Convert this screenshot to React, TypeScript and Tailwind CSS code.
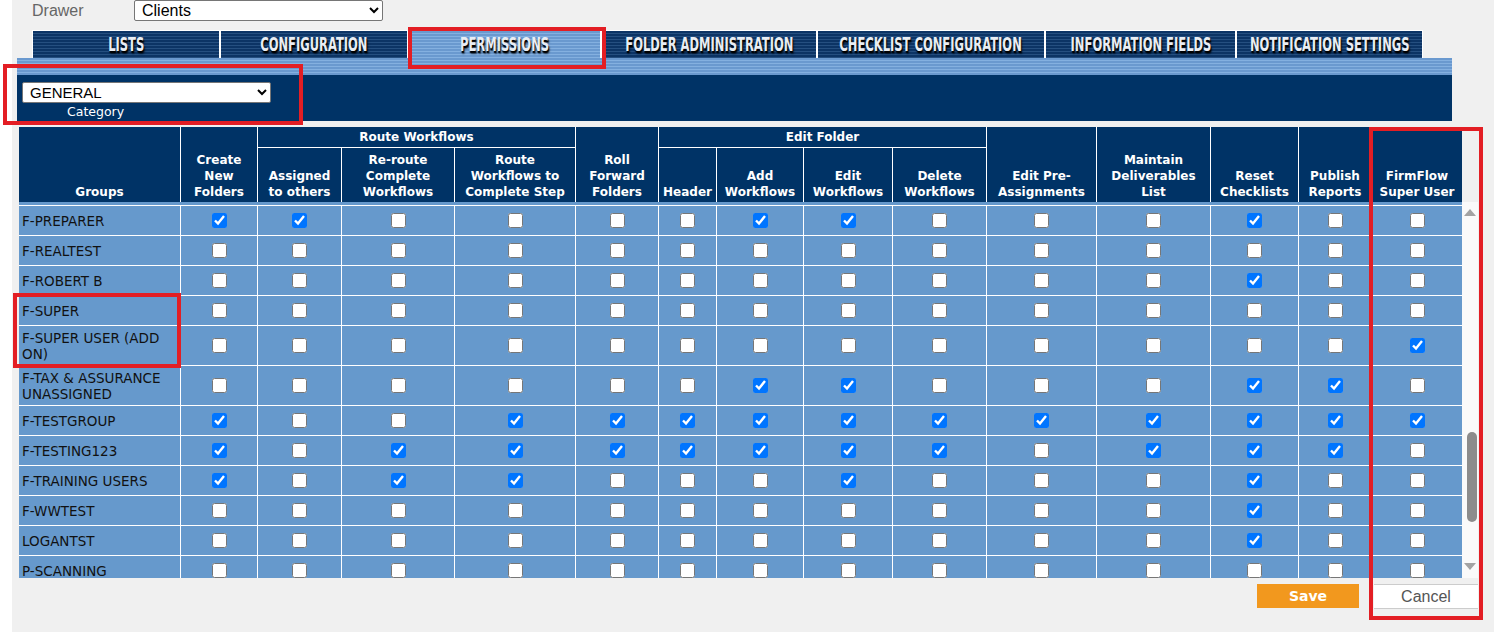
import React from "react";
import clsx from "clsx";

type Row = { name: React.ReactNode; checked: number[]; tall?: boolean };

// widths of the 14 permission columns (Groups column is 162px)
const colW = [
  "w-[77px]",
  "w-[84px]",
  "w-[113px]",
  "w-[121px]",
  "w-[83px]",
  "w-[58px]",
  "w-[87px]",
  "w-[89px]",
  "w-[94px]",
  "w-[110px]",
  "w-[114px]",
  "w-[88px]",
  "w-[73px]",
  "w-[90px]",
];

const rows: Row[] = [
  { name: "F-PREPARER", checked: [0, 1, 6, 7, 11] },
  { name: "F-REALTEST", checked: [] },
  { name: "F-ROBERT B", checked: [11] },
  { name: "F-SUPER", checked: [] },
  { name: "F-SUPER USER (ADD ON)", checked: [13], tall: true },
  { name: "F-TAX & ASSURANCE UNASSIGNED", checked: [6, 7, 11, 12], tall: true },
  { name: "F-TESTGROUP", checked: [0, 3, 4, 5, 6, 7, 8, 9, 10, 11, 12, 13] },
  { name: "F-TESTING123", checked: [0, 2, 3, 4, 5, 6, 7, 8, 10, 11, 12] },
  { name: "F-TRAINING USERS", checked: [0, 2, 3, 7, 11] },
  { name: "F-WWTEST", checked: [11] },
  { name: "LOGANTST", checked: [11] },
  { name: "P-SCANNING", checked: [] },
];

const tabs = [
  { label: "LISTS", w: "w-[188px]" },
  { label: "CONFIGURATION", w: "w-[188px]" },
  { label: "PERMISSIONS", w: "w-[193px]", active: true },
  { label: "FOLDER ADMINISTRATION", w: "w-[216px]" },
  { label: "CHECKLIST CONFIGURATION", w: "w-[228px]" },
  { label: "INFORMATION FIELDS", w: "w-[191px]" },
  { label: "NOTIFICATION SETTINGS", w: "w-[187px]" },
];

const HeadCell = ({
  w,
  last,
  children,
}: {
  w: string;
  last?: boolean;
  children: React.ReactNode;
}) => (
  <div
    className={clsx(
      "flex shrink-0 items-end justify-center pb-[2px] text-center",
      w,
      !last && "border-r border-white"
    )}
  >
    <span>{children}</span>
  </div>
);

const Tab = ({ label, w, active }: { label: string; w: string; active?: boolean }) => (
  <div
    className={clsx(
      "flex h-[28px] shrink-0 items-center justify-center border-x border-t border-white",
      w,
      active
        ? "bg-[repeating-linear-gradient(to_bottom,#6a99cf_0px,#6a99cf_2px,#84b0e0_2px,#84b0e0_3px)]"
        : "bg-[repeating-linear-gradient(to_bottom,#0c3465_0px,#0c3465_2px,#254f80_2px,#254f80_3px)]"
    )}
  >
    <span className="inline-block scale-x-[0.64] scale-y-[1.08] whitespace-nowrap font-['DejaVu_Sans',sans-serif] text-[18px] leading-none font-bold text-[#e9edf3] [text-shadow:1px_1px_1px_#000,2px_2px_2px_rgba(0,0,0,0.6)]">
      {label}
    </span>
  </div>
);

const App = () => {
  return (
    <div className="relative flex h-[632px] w-[1494px] overflow-hidden bg-white font-['Liberation_Sans',Arial,sans-serif]">
      <div className="ml-[12px] flex flex-1 flex-col bg-[#f0f0f0]">
        {/* drawer picker */}
        <div className="flex h-[21px] items-start pl-[20px]">
          <span className="w-[102px] pt-[2px] text-[16px] leading-[18px] text-[#666]">Drawer</span>
          <select className="h-[21px] w-[249px] rounded-[2px] border border-[#767676] bg-white pl-[3px] text-[16px] leading-[18px] text-black">
            <option>Clients</option>
          </select>
        </div>

        {/* tabs */}
        <div className="mt-[9px] flex pl-[20px]">
          {tabs.map((t) => (
            <Tab key={t.label} {...t} />
          ))}
        </div>

        <div className="ml-[5px] h-[17px] w-[1435px] bg-[repeating-linear-gradient(to_bottom,#6a99cf_0px,#6a99cf_2px,#84b0e0_2px,#84b0e0_3px)]" />

        <div className="ml-[5px] flex h-[46px] w-[1435px] flex-col bg-[#003366] pl-[5px] pt-[7px]">
          <select className="h-[21px] w-[249px] rounded-[2px] border border-[#767676] bg-white pl-[3px] text-[15px] leading-[18px] text-black">
            <option>GENERAL</option>
          </select>
          <span className="pl-[45px] pt-[1px] font-['DejaVu_Sans',sans-serif] text-[12.5px] leading-[15px] text-white">
            Category
          </span>
        </div>

        {/* permissions grid */}
        <div className="ml-[7px] mt-[6px] flex w-[1459px] flex-col">
          <div className="flex h-[75px] w-[1443px] bg-[#003366] font-['DejaVu_Sans',sans-serif] text-[12px] leading-[16px] font-bold text-white">
            <HeadCell w="w-[162px]">Groups</HeadCell>
            <HeadCell w="w-[77px]">
              Create<br />New<br />Folders
            </HeadCell>
            <div className="flex w-[318px] shrink-0 flex-col border-r border-white">
              <div className="flex h-[21px] items-center justify-center border-b border-white">Route Workflows</div>
              <div className="flex flex-1">
                <HeadCell w="w-[84px]">
                  Assigned<br />to others
                </HeadCell>
                <HeadCell w="w-[113px]">
                  Re-route<br />Complete<br />Workflows
                </HeadCell>
                <HeadCell w="w-[120px]" last>
                  Route<br />Workflows to<br />Complete Step
                </HeadCell>
              </div>
            </div>
            <HeadCell w="w-[83px]">
              Roll<br />Forward<br />Folders
            </HeadCell>
            <div className="flex w-[328px] shrink-0 flex-col border-r border-white">
              <div className="flex h-[21px] items-center justify-center border-b border-white">Edit Folder</div>
              <div className="flex flex-1">
                <HeadCell w="w-[58px]">Header</HeadCell>
                <HeadCell w="w-[87px]">
                  Add<br />Workflows
                </HeadCell>
                <HeadCell w="w-[89px]">
                  Edit<br />Workflows
                </HeadCell>
                <HeadCell w="w-[93px]" last>
                  Delete<br />Workflows
                </HeadCell>
              </div>
            </div>
            <HeadCell w="w-[110px]">
              Edit Pre-<br />Assignments
            </HeadCell>
            <HeadCell w="w-[114px]">
              Maintain<br />Deliverables<br />List
            </HeadCell>
            <HeadCell w="w-[88px]">
              Reset<br />Checklists
            </HeadCell>
            <HeadCell w="w-[73px]">
              Publish<br />Reports
            </HeadCell>
            <HeadCell w="w-[90px]" last>
              FirmFlow<br />Super User
            </HeadCell>
          </div>

          <div className="flex h-[376px]">
            <div className="w-[1443px] overflow-hidden bg-[#6699cc] pt-[3px]">
              <div className="border-t border-white">
                {rows.map((r, ri) => (
                  <div
                    key={ri}
                    className={clsx("flex border-b border-white", r.tall ? "h-[40px]" : "h-[30px]")}
                  >
                    <div className="flex w-[162px] shrink-0 items-center border-r border-white pl-[3px] pr-[2px] font-['DejaVu_Sans',sans-serif] text-[13.5px] leading-[16px] text-[#111]">
                      {r.name}
                    </div>
                    {colW.map((w, i) => (
                      <div
                        key={i}
                        className={clsx(
                          "flex shrink-0 items-center justify-center",
                          w,
                          i < colW.length - 1 && "border-r border-white"
                        )}
                      >
                        <input
                          type="checkbox"
                          className="h-[15px] w-[15px]"
                          defaultChecked={r.checked.includes(i)}
                        />
                      </div>
                    ))}
                  </div>
                ))}
              </div>
            </div>
            {/* scrollbar */}
            <div className="flex w-[16px] flex-col items-center bg-[#fafafa]">
              <div className="mt-[7px] h-0 w-0 border-x-[6px] border-b-[7px] border-x-transparent border-b-[#a3a3a3]" />
              <div className="ml-[3px] mt-[216px] h-[90px] w-[10px] rounded-full bg-[#8c8c8c]" />
              <div className="mb-[8px] mt-auto h-0 w-0 border-x-[6px] border-t-[7px] border-x-transparent border-t-[#a3a3a3]" />
            </div>
          </div>

          <div className="mt-[6px] flex justify-end gap-[15px]">
            <button className="flex h-[24px] w-[102px] items-center justify-center bg-[#f2981e] font-['DejaVu_Sans',sans-serif] text-[14px] font-bold text-white">
              Save
            </button>
            <button className="flex h-[25px] w-[104px] items-center justify-center border-y border-[#cccccc] bg-white text-[16px] text-[#555]">
              Cancel
            </button>
          </div>
        </div>
      </div>

      {/* red annotation boxes */}
      <div className="absolute left-[3px] top-[64px] h-[61px] w-[300px] border-4 border-[#e31e24]" />
      <div className="absolute left-[408px] top-[27px] h-[42px] w-[198px] border-4 border-[#e31e24]" />
      <div className="absolute left-[13px] top-[293px] h-[75px] w-[168px] border-4 border-[#e31e24]" />
      <div className="absolute left-[1369px] top-[127px] h-[493px] w-[114px] border-4 border-[#e31e24]" />
    </div>
  );
};

export default App;
